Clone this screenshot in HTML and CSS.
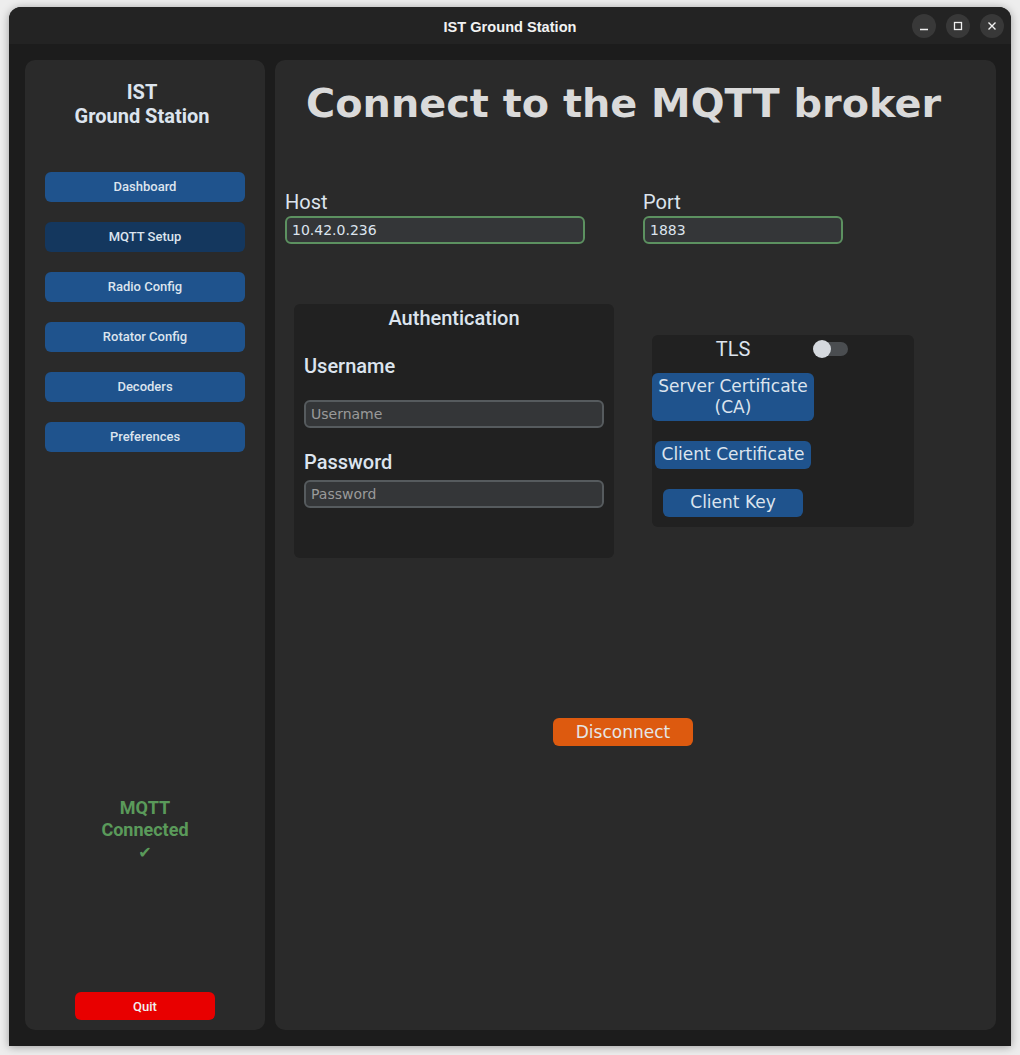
FILE: index.html
```html
<!DOCTYPE html>
<html lang="en">
<head>
<meta charset="utf-8">
<title>IST Ground Station</title>
<link rel="stylesheet" href="styles.css">
</head>
<body>
<div class="window">
  <header class="titlebar">
    <div class="tb-spacer"></div>
    <div class="wtitle">IST Ground Station</div>
    <div class="controls">
      <span class="ctl"><svg width="24" height="24" viewBox="0 0 24 24"><path d="M8 15.5h8" stroke="#f0f0f0" stroke-width="1.4" fill="none"/></svg></span>
      <span class="ctl"><svg width="24" height="24" viewBox="0 0 24 24"><rect x="8.5" y="8.5" width="7" height="7" stroke="#f0f0f0" stroke-width="1.3" fill="none"/></svg></span>
      <span class="ctl"><svg width="24" height="24" viewBox="0 0 24 24"><path d="M8.5 8.5l7 7M15.5 8.5l-7 7" stroke="#f0f0f0" stroke-width="1.4" fill="none"/></svg></span>
    </div>
  </header>
  <div class="app">
    <aside class="sidebar">
      <div class="brand">IST<br>Ground Station</div>
      <nav class="nav">
        <button class="nav-btn">Dashboard</button>
        <button class="nav-btn active">MQTT Setup</button>
        <button class="nav-btn">Radio Config</button>
        <button class="nav-btn">Rotator Config</button>
        <button class="nav-btn">Decoders</button>
        <button class="nav-btn">Preferences</button>
      </nav>
      <div class="status">MQTT<br>Connected<br><span class="check">✔</span></div>
      <button class="quit">Quit</button>
    </aside>
    <main class="main">
      <h1 class="heading">Connect to the MQTT broker</h1>
      <div class="conn-row">
        <div class="field host">
          <div class="field-label">Host</div>
          <div class="entry entry-ok">10.42.0.236</div>
        </div>
        <div class="field port">
          <div class="field-label">Port</div>
          <div class="entry entry-ok">1883</div>
        </div>
      </div>
      <div class="frames-row">
        <section class="auth">
          <div class="auth-title">Authentication</div>
          <div class="auth-label">Username</div>
          <div class="entry entry-plain gap-big placeholder">Username</div>
          <div class="auth-label">Password</div>
          <div class="entry entry-plain gap-small placeholder">Password</div>
        </section>
        <section class="tls">
          <div class="tls-head">
            <div class="tls-title">TLS</div>
            <div class="switch"><span class="knob"></span></div>
          </div>
          <div class="tls-buttons">
            <button class="cert-btn server">Server Certificate<br>(CA)</button>
            <button class="cert-btn client">Client Certificate</button>
            <button class="cert-btn key">Client Key</button>
          </div>
        </section>
      </div>
      <div class="action-row">
        <button class="disconnect">Disconnect</button>
      </div>
    </main>
  </div>
</div>
</body>
</html>
```
FILE: styles.css
```css
html, body {
  margin: 0;
  padding: 0;
}
body {
  background: #ededed;
  width: 1020px;
  height: 1055px;
  overflow: hidden;
}
.window {
  width: 1002px;
  height: 1039px;
  margin: 7px 0 0 9px;
  border-radius: 12px 12px 0 0;
  overflow: hidden;
  box-shadow: 0 1px 8px rgba(0,0,0,0.35);
  background: #1c1c1c;
}
.titlebar {
  height: 37px;
  background: #232323;
  display: grid;
  grid-template-columns: 1fr auto 1fr;
  align-items: center;
}
.wtitle {
  font: bold 14.6px "Liberation Sans", Arial, sans-serif;
  color: #f2f2f2;
  padding-top: 2px;
}
.controls {
  justify-self: end;
  display: flex;
  gap: 10px;
  padding-right: 7px;
}
.ctl {
  width: 24px;
  height: 24px;
  border-radius: 50%;
  background: #383838;
  display: block;
}
.ctl svg { display: block; }
.app {
  height: 1002px;
  box-sizing: border-box;
  padding: 16px 15px 16px 16px;
  display: flex;
  gap: 10px;
}
.sidebar {
  width: 240px;
  flex: none;
  box-sizing: border-box;
  background: #2a2a2a;
  border-radius: 10px;
  padding: 20px 0 10px;
  display: flex;
  flex-direction: column;
  align-items: center;
}
.brand {
  font: bold 20px/24px Roboto, sans-serif;
  color: #dce4ee;
  text-align: center;
  margin-right: 6px;
}
.nav {
  margin-top: 44px;
  display: flex;
  flex-direction: column;
  gap: 20px;
}
button {
  border: none;
  padding: 0;
  margin: 0;
  cursor: pointer;
}
.nav-btn {
  width: 200px;
  height: 30px;
  border-radius: 6px;
  background: #1f538d;
  color: #dce4ee;
  font: 500 13px Roboto, sans-serif;
  padding-bottom: 1px;
}
.nav-btn.active {
  background: #14375e;
}
.status {
  margin-top: auto;
  font: bold 18px/22px Roboto, sans-serif;
  color: #5a9a5a;
  text-align: center;
}
.check {
  font-family: "DejaVu Sans", sans-serif;
  font-size: 16px;
}
.quit {
  margin-top: 128px;
  width: 140px;
  height: 28px;
  border-radius: 6px;
  background: #e80000;
  color: #f0f0f0;
  font: 500 13px Roboto, sans-serif;
}
.main {
  flex: 1;
  background: #2a2a2a;
  border-radius: 10px;
  padding-top: 19px;
  box-sizing: border-box;
}
.heading {
  margin: 0 0 0 31px;
  font: bold 39.8px/48px "DejaVu Sans", sans-serif;
  color: #dadada;
}
.conn-row {
  margin-top: 63px;
  padding-left: 10px;
  display: flex;
  gap: 58px;
}
.field-label {
  font: 400 20px/24px Roboto, sans-serif;
  color: #dce4ee;
  margin-bottom: 2px;
}
.host .entry { width: 300px; }
.port .entry { width: 200px; }
.entry {
  box-sizing: border-box;
  height: 28px;
  border: 2px solid #565b5e;
  border-radius: 6px;
  background: #343638;
  padding: 0 5px 1px;
  display: flex;
  align-items: center;
  font: 14px "DejaVu Sans", sans-serif;
  color: #dce4ee;
}
.entry-ok {
  border-color: #5c9160;
}
.placeholder {
  color: #9a9a9a;
}
.frames-row {
  margin-top: 60px;
  padding-left: 19px;
  display: flex;
  align-items: flex-start;
  gap: 38px;
}
.auth {
  width: 320px;
  height: 254px;
  box-sizing: border-box;
  padding: 2px 10px 0;
  background: #212121;
  border-radius: 6px;
}
.auth-title {
  text-align: center;
  font: 500 20px/24px Roboto, sans-serif;
  color: #dce4ee;
}
.auth-label {
  margin-top: 22px;
  font: 500 20px/24px Roboto, sans-serif;
  color: #dce4ee;
}
.auth-title + .auth-label { margin-top: 24px; }
.entry-plain { width: 300px; }
.gap-big { margin-top: 22px; }
.gap-small { margin-top: 6px; }
.tls {
  margin-top: 31px;
  width: 262px;
  height: 192px;
  box-sizing: border-box;
  background: #212121;
  border-radius: 6px;
}
.tls-head {
  height: 28px;
  display: flex;
  align-items: center;
}
.tls-title {
  width: 162px;
  text-align: center;
  font: 400 20px/24px Roboto, sans-serif;
  color: #dce4ee;
}
.switch {
  margin-left: 0;
  width: 34px;
  height: 14px;
  border-radius: 7px;
  background: #4a4d50;
  display: flex;
  align-items: center;
}
.knob {
  width: 18px;
  height: 18px;
  border-radius: 50%;
  background: #d5d9de;
  margin-left: -1px;
}
.tls-buttons {
  width: 162px;
  margin-top: 10px;
  display: flex;
  flex-direction: column;
  align-items: center;
  gap: 20px;
}
.cert-btn {
  background: #1f538d;
  color: #dce4ee;
  border-radius: 6px;
  font: 17px/21px "DejaVu Sans", sans-serif;
  height: 28px;
  padding-bottom: 1px;
}
.cert-btn.server {
  width: 162px;
  height: 48px;
}
.cert-btn.client { width: 156px; }
.cert-btn.key { width: 140px; }
.action-row {
  margin-top: 160px;
  padding-left: 278px;
}
.disconnect {
  width: 140px;
  height: 28px;
  border-radius: 6px;
  background: #dd5a0f;
  color: #e6e6e6;
  font: 17px "DejaVu Sans", sans-serif;
  padding-bottom: 1px;
}
```
